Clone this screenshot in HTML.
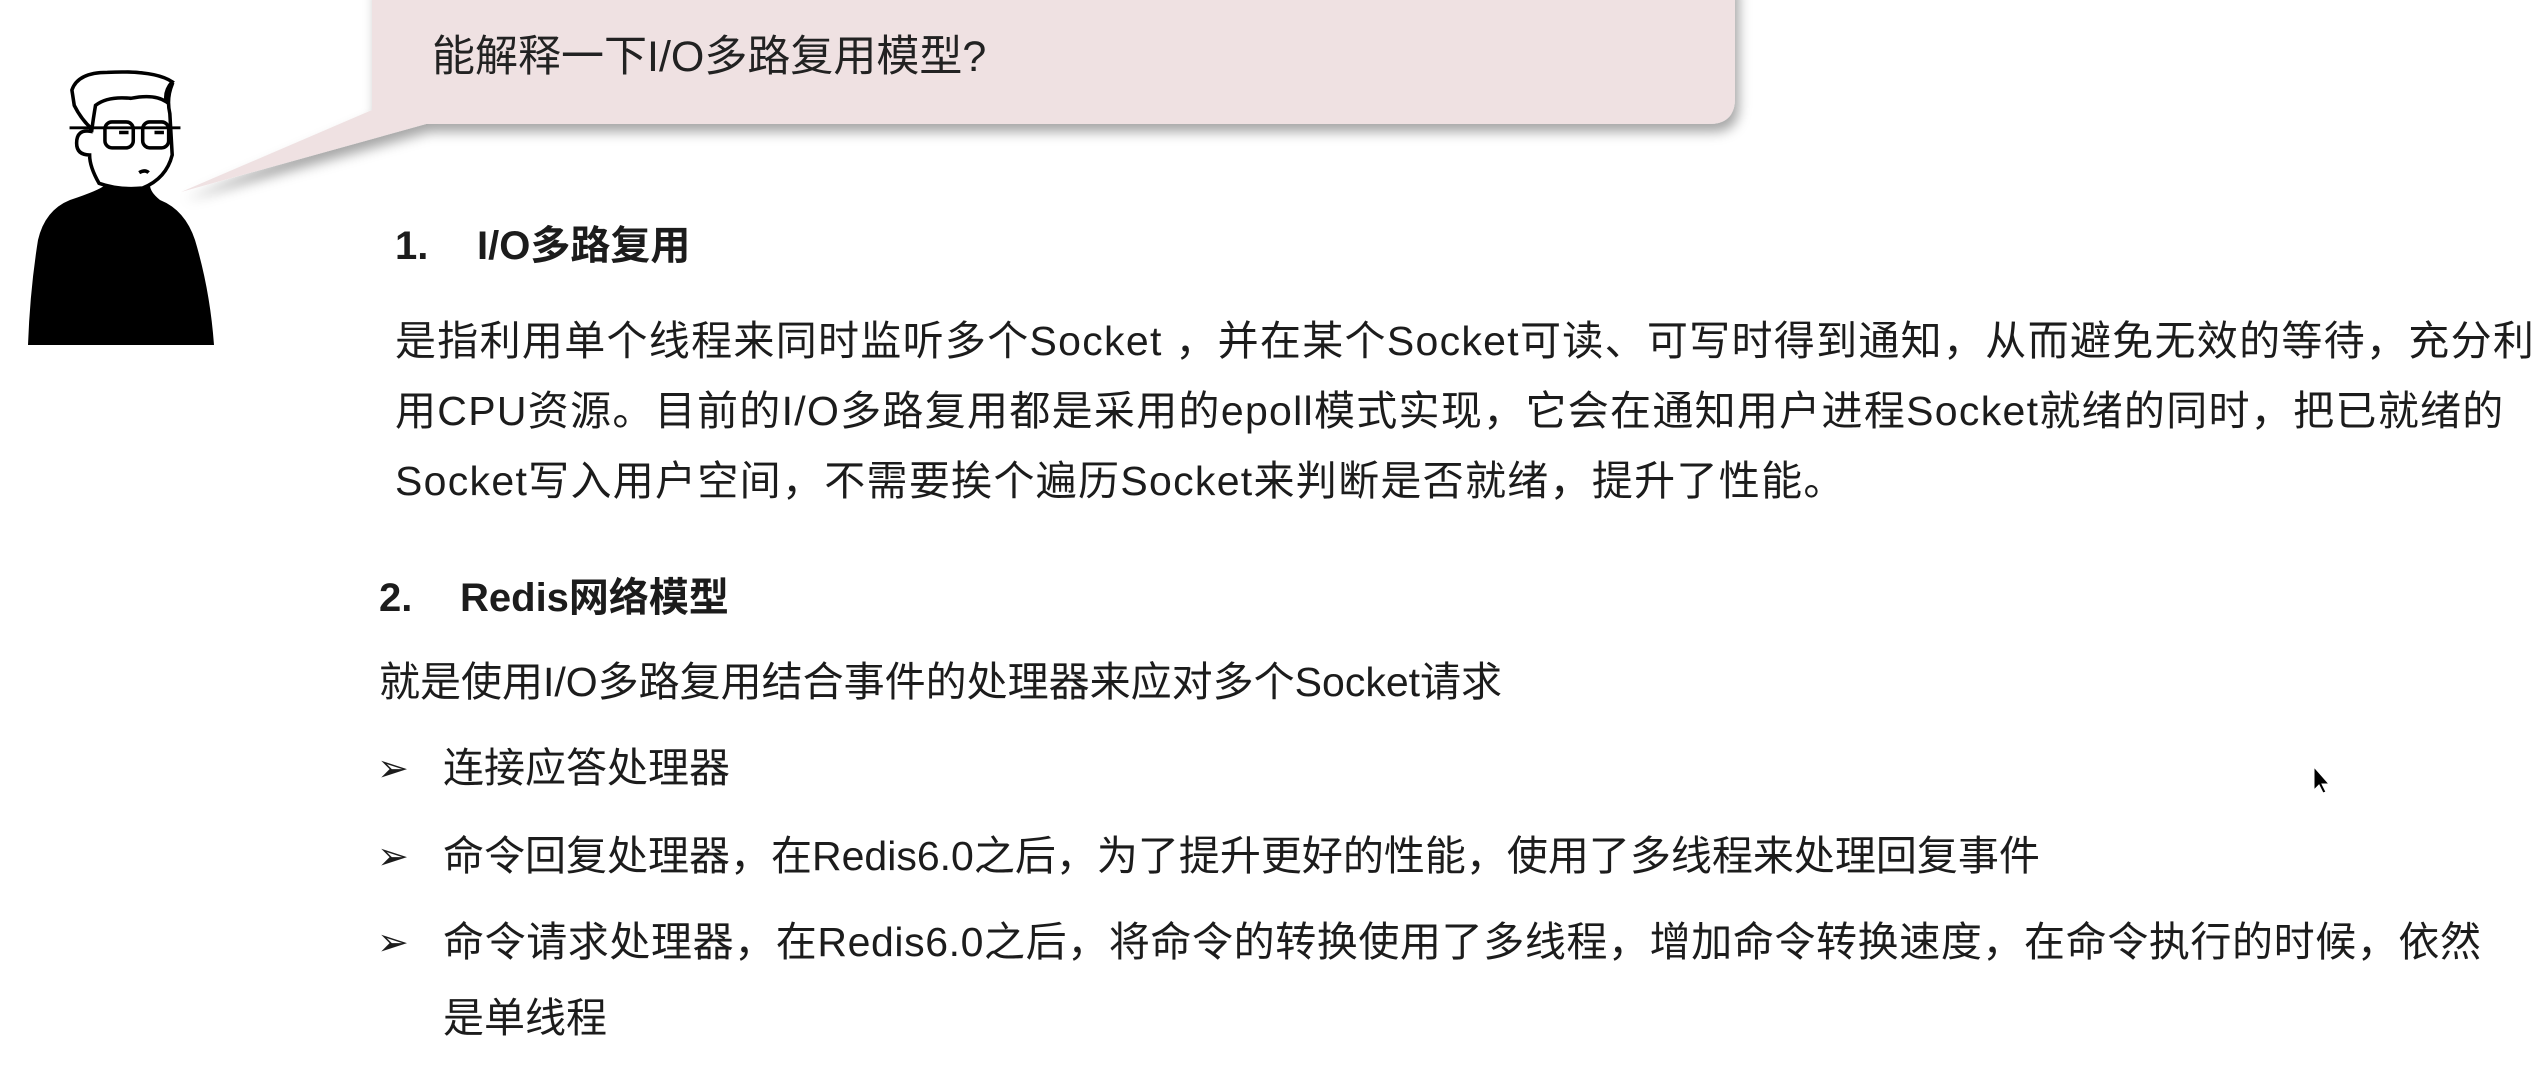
<!DOCTYPE html>
<html><head><meta charset="utf-8"><style>
html,body{margin:0;padding:0;background:#fff;}
body{width:2546px;height:1068px;position:relative;overflow:hidden;font-family:"Liberation Sans","Noto Sans CJK SC",sans-serif;color:#1c1c1c;}
.t{position:absolute;white-space:nowrap;font-size:41px;line-height:1;}
.p{letter-spacing:1.3px;}
.h{font-weight:bold;font-size:40px;}
.b{position:absolute;font-size:38px;line-height:1;font-family:"DejaVu Sans",sans-serif;}
</style></head><body>
<svg width="2546" height="1068" style="position:absolute;left:0;top:0">
<defs><filter id="sh" x="-10%" y="-10%" width="120%" height="140%"><feDropShadow dx="4" dy="8" stdDeviation="6" flood-color="#000" flood-opacity="0.35"/></filter></defs>
<path d="M372 -20 H1735 V98 Q1735 124 1709 124 H426 L181 192 L372 110 Z" fill="#efe1e2" filter="url(#sh)"/>
<path d="M105 185 Q100 190 70 200 Q45 210 38 240 Q30 290 28 345 L214 345 Q210 290 195 240 Q185 210 160 200 Q150 192 150 185 Q130 195 105 185Z" fill="#000"/>
<g transform="translate(125 188) scale(1.18) translate(-125 -188)">
<path d="M103 184 Q95 170 95 160 Q84 160 84 150 Q84 138 96 140 L95 120 Q95 95 110 92 Q140 85 165 100 Q160 112 163 125 L165 160 Q160 180 140 188 Q120 190 103 184Z" fill="#fff" stroke="#000" stroke-width="3"/>
<path d="M80 105 Q85 90 110 90 Q150 88 165 98 Q158 106 160 115 Q150 108 130 112 Q110 110 100 118 Q98 130 97 138 Q88 130 82 118Z" fill="#fff" stroke="#000" stroke-width="3"/>
<path d="M78 137 H172" stroke="#000" stroke-width="2.5"/>
<rect x="108" y="132" width="24" height="22" rx="6" fill="none" stroke="#000" stroke-width="3"/>
<rect x="140" y="132" width="22" height="22" rx="6" fill="none" stroke="#000" stroke-width="3"/>
<path d="M120 141 h8 M150 141 h8" stroke="#000" stroke-width="3"/>
<path d="M137 175 q5 -3 8 0" stroke="#000" stroke-width="3" fill="none"/>
</g>
<path d="M2314 767 L2314 790 L2319 785 L2323 793 L2326 792 L2322 784 L2329 784 Z" fill="#000" stroke="#fff" stroke-width="1"/>
</svg>
<div class="t" style="left:432px;top:36px;font-size:43px;color:#222">能解释一下I/O多路复用模型?</div>
<div class="t h" style="left:395px;top:226px">1.</div>
<div class="t h" style="left:477px;top:226px">I/O多路复用</div>
<div class="t p" style="left:395px;top:321px">是指利用单个线程来同时监听多个Socket ，并在某个Socket可读、可写时得到通知，从而避免无效的等待，充分利</div>
<div class="t p" style="left:395px;top:391px">用CPU资源。目前的I/O多路复用都是采用的epoll模式实现，它会在通知用户进程Socket就绪的同时，把已就绪的</div>
<div class="t p" style="left:395px;top:461px">Socket写入用户空间，不需要挨个遍历Socket来判断是否就绪，提升了性能。</div>
<div class="t h" style="left:379px;top:578px">2.</div>
<div class="t h" style="left:460px;top:578px">Redis网络模型</div>
<div class="t" style="left:379px;top:662px">就是使用I/O多路复用结合事件的处理器来应对多个Socket请求</div>
<div class="b" style="left:377px;top:749px">➢</div>
<div class="t" style="left:443px;top:748px">连接应答处理器</div>
<div class="b" style="left:377px;top:837px">➢</div>
<div class="t" style="left:443px;top:836px">命令回复处理器，在Redis6.0之后，为了提升更好的性能，使用了多线程来处理回复事件</div>
<div class="b" style="left:377px;top:923px">➢</div>
<div class="t" style="left:443px;top:922px;letter-spacing:0.6px">命令请求处理器，在Redis6.0之后，将命令的转换使用了多线程，增加命令转换速度，在命令执行的时候，依然</div>
<div class="t" style="left:443px;top:998px">是单线程</div>
</body></html>
